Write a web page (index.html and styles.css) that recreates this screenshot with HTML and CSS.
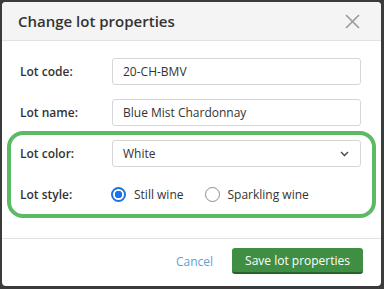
FILE: index.html
```html
<!DOCTYPE html>
<html>
<head>
<meta charset="utf-8">
<link rel="stylesheet" href="styles.css">
</head>
<body>
<div class="modal">
  <div class="header">
    <h1 class="title">Change lot properties</h1>
    <svg class="close" width="15" height="15" viewBox="0 0 15 15"><path d="M1 1L14 14M14 1L1 14" stroke="#9a9a9a" stroke-width="1.6" fill="none"/></svg>
  </div>
  <div class="body">
    <div class="row">
      <label class="label">Lot code:</label>
      <div class="field">20-CH-BMV</div>
    </div>
    <div class="row">
      <label class="label">Lot name:</label>
      <div class="field">Blue Mist Chardonnay</div>
    </div>
    <div class="highlight">
      <div class="row">
        <label class="label">Lot color:</label>
        <div class="field select">White
          <svg class="chev" width="9" height="6" viewBox="0 0 9 6"><path d="M1 1L4.5 4.5L8 1" stroke="#444" stroke-width="1.3" fill="none"/></svg>
        </div>
      </div>
      <div class="row">
        <label class="label">Lot style:</label>
        <div class="radios">
          <span class="radio checked"></span><span class="rtext">Still wine</span>
          <span class="radio"></span><span class="rtext">Sparkling wine</span>
        </div>
      </div>
    </div>
  </div>
  <div class="footer">
    <span class="cancel">Cancel</span>
    <span class="save">Save lot properties</span>
  </div>
</div>
</body>
</html>
```
FILE: styles.css
```css
html, body { margin: 0; padding: 0; }
body {
  background: #3b3b3b;
  width: 384px;
  height: 289px;
  overflow: hidden;
  font-family: "Open Sans", "Liberation Sans", sans-serif;
  color: #333;
}
.modal {
  margin: 2px 0 0 2px;
  width: 379px;
  height: 284px;
  background: #fff;
  border-radius: 4px;
  overflow: hidden;
  display: flex;
  flex-direction: column;
}
.header {
  height: 38px;
  background: #f4f4f4;
  border-bottom: 1px solid #e2e2e2;
  display: flex;
  align-items: center;
  justify-content: space-between;
  padding: 0 21px 0 16px;
}
.title {
  margin: 0;
  font-size: 15px;
  font-weight: 600;
  color: #333;
}
.close { display: block; }
.body {
  padding: 17px 20px 0 18px;
}
.row {
  display: flex;
  align-items: center;
  height: 27px;
  margin-bottom: 14px;
}
.label {
  width: 92px;
  flex: none;
  font-size: 12px;
  font-weight: 600;
  color: #333;
}
.field {
  flex: 1;
  height: 27px;
  box-sizing: border-box;
  border: 1px solid #d6d6d6;
  border-radius: 3px;
  padding: 0 10px;
  font-size: 12px;
  display: flex;
  align-items: center;
  color: #333;
}
.select { justify-content: space-between; padding-right: 11px; }
.highlight {
  margin: -9px -15px 0 -13px;
  border: 4px solid #5cba62;
  border-radius: 16px;
  padding: 5px 11px 6px 9px;
}
.highlight .row:last-child { margin-bottom: 0; }
.radios {
  display: flex;
  align-items: center;
  font-size: 12px;
}
.radio {
  width: 15px;
  height: 15px;
  box-sizing: border-box;
  border: 1px solid #8c8c8c;
  border-radius: 50%;
  margin-right: 8px;
  flex: none;
}
.radio.checked {
  border: 2px solid #1a73e8;
  background: radial-gradient(circle, #1a73e8 0 3.5px, #fff 4px);
}
.radios .radio:first-child { margin-left: -1px; }
.rtext { margin-right: 21px; }
.footer {
  margin-top: 20px;
  border-top: 1px solid #e2e2e2;
  display: flex;
  justify-content: flex-end;
  align-items: center;
  padding: 9px 18px 0 0;
}
.cancel {
  color: #5fa0d4;
  font-size: 12px;
  margin-right: 19px;
}
.save {
  background: #3f8e43;
  color: #fff;
  font-size: 12px;
  font-weight: 500;
  height: 26px;
  box-sizing: border-box;
  border-bottom: 2px solid #27622a;
  border-radius: 3px;
  padding: 0 13px;
  display: flex;
  align-items: center;
}
```
